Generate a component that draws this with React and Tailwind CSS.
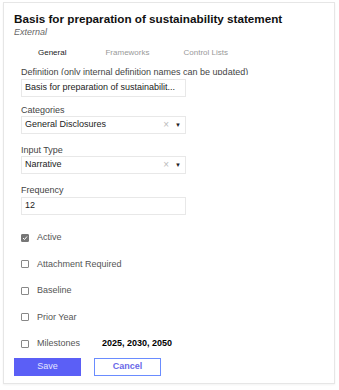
import { useState } from 'react';

const font = { fontFamily: '"Liberation Sans", Arial, sans-serif' };

function SelectBox({ value }) {
  return (
    <div className="flex items-center w-[165px] h-[18px] border border-[#e8e8e8] bg-white pl-[3px] pr-[4px]">
      <span className="flex-1 text-[9px] text-[#222]">{value}</span>
      <span className="text-[10px] leading-none text-[#bbb] mr-[6px]">×</span>
      <span className="text-[6px] leading-none text-[#222]">▼</span>
    </div>
  );
}

function Check({ label, checked, extra }) {
  return (
    <div className="flex items-center h-[26.5px]">
      <span
        className={`flex items-center justify-center w-[8px] h-[8px] rounded-[1px] border ${
          checked ? 'bg-[#777] border-[#777]' : 'bg-white border-[#888]'
        }`}
      >
        {checked && (
          <svg width="6" height="6" viewBox="0 0 6 6">
            <path d="M1 3 L2.5 4.5 L5 1.5" stroke="white" strokeWidth="1" fill="none" />
          </svg>
        )}
      </span>
      <span className="ml-[8px] text-[9px] text-[#555]">{label}</span>
      {extra && <span className="ml-[22px] text-[9px] font-bold text-black">{extra}</span>}
    </div>
  );
}

export default function App() {
  const [tab] = useState('General');
  const tabs = [
    { name: 'General', cls: 'ml-[24px]' },
    { name: 'Frameworks', cls: 'ml-[39px]' },
    { name: 'Control Lists', cls: 'ml-[34px]' },
  ];

  return (
    <div className="w-[339px] h-[390px] bg-white pt-[2px] pl-[3px]" style={font}>
      <div className="w-[332px] h-[382px] border border-[#e6e6e6] shadow-[0_1px_2px_rgba(0,0,0,0.05)] px-[10px]">
        <h1 className="pt-[7px] text-[11.7px] leading-[17px] font-bold text-[#111]">
          Basis for preparation of sustainability statement
        </h1>
        <p className="text-[9px] leading-[11px] italic text-[#666]">External</p>

        <div className="flex mt-[10px] text-[8px] leading-[10px]">
          {tabs.map((t) => (
            <span
              key={t.name}
              className={`${t.cls} ${tab === t.name ? 'text-[#222] font-medium' : 'text-[#999]'}`}
            >
              {t.name}
            </span>
          ))}
        </div>

        <div className="pl-[7px]">
          <div className="mt-[9px] h-[7.5px] overflow-hidden">
            <p className="text-[9px] leading-[11px] text-[#444]">
              Definition (only internal definition names can be updated)
            </p>
          </div>
          <div className="mt-[4px] flex items-center w-[165px] h-[18px] border border-[#e8e8e8] pl-[3px]">
            <span className="text-[9px] text-[#222]">Basis for preparation of sustainabilit...</span>
          </div>

          <p className="mt-[8px] text-[9px] leading-[11px] text-[#444]">Categories</p>
          <SelectBox value="General Disclosures" />

          <p className="mt-[11px] text-[9px] leading-[11px] text-[#444]">Input Type</p>
          <SelectBox value="Narrative" />

          <p className="mt-[11px] text-[9px] leading-[11px] text-[#444]">Frequency</p>
          <div className="mt-[1px] flex items-center w-[165px] h-[18px] border border-[#e8e8e8] pl-[3px]">
            <span className="text-[9px] text-[#222]">12</span>
          </div>

          <div className="mt-[10px]">
            <Check label="Active" checked />
            <Check label="Attachment Required" />
            <Check label="Baseline" />
            <Check label="Prior Year" />
            <Check label="Milestones" extra="2025, 2030, 2050" />
          </div>
        </div>

        <div className="flex gap-[13px] mt-[1px]">
          <button className="w-[67px] h-[18px] bg-[#5b5ff6] text-[9px] text-[#e4e4ff]">Save</button>
          <button className="w-[67px] h-[18px] border border-[#6a8cff] bg-white text-[9px] font-bold text-[#6a6ae8]">
            Cancel
          </button>
        </div>
      </div>
    </div>
  );
}
